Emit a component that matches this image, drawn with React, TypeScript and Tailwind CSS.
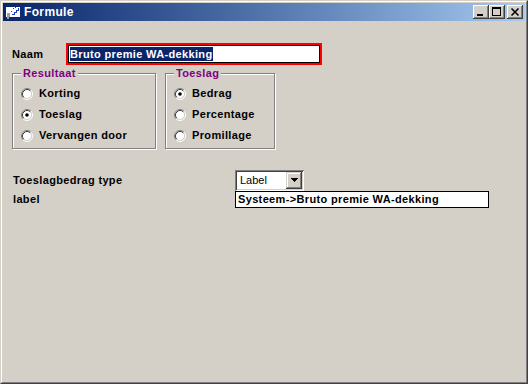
import React from 'react';

const Radio = ({ checked = false }: { checked?: boolean }) => (
  <svg width="12" height="12" viewBox="0 0 12 12" className="shrink-0">
    <circle cx="6" cy="6" r="4.5" fill="#fff" />
    <path d="M2.11 9.89 A5.5 5.5 0 0 1 9.89 2.11" fill="none" stroke="#808080" />
    <path d="M9.89 2.11 A5.5 5.5 0 0 1 2.11 9.89" fill="none" stroke="#fff" />
    <path d="M2.82 9.18 A4.5 4.5 0 0 1 9.18 2.82" fill="none" stroke="#404040" />
    <path d="M9.18 2.82 A4.5 4.5 0 0 1 2.82 9.18" fill="none" stroke="#d4d0c8" />
    {checked && <circle cx="6" cy="6" r="1.8" fill="#000" />}
  </svg>
);

const CapBtn = ({ children }: { children: React.ReactNode }) => (
  <div className="w-[16px] h-[14px] bg-[#d4d0c8] shadow-[inset_-1px_-1px_0_#404040,inset_1px_1px_0_#fff,inset_-2px_-2px_0_#808080,inset_2px_2px_0_#d4d0c8]">
    <svg width="16" height="14" viewBox="0 0 16 14" shapeRendering="crispEdges">
      {children}
    </svg>
  </div>
);

const Group = ({ title, width, items }: { title: string; width: string; items: { label: string; checked?: boolean }[] }) => (
  <div className={`relative ${width} border border-[#808080] shadow-[inset_1px_1px_0_#fff,1px_1px_0_#fff] pl-[8px] pt-[9px] pb-[2px]`}>
    <span className="absolute -top-[7px] left-[8px] h-[13px] leading-[13px] px-[2px] bg-[#d4d0c8] text-[#800080]">
      {title}
    </span>
    {items.map((it) => (
      <div key={it.label} className="flex items-center h-[21px] gap-[6px]">
        <Radio checked={it.checked} />
        <span>{it.label}</span>
      </div>
    ))}
  </div>
);

export default function App() {
  return (
    <div className="w-[528px] h-[384px] border border-t-[#d4d0c8] border-l-[#d4d0c8] border-r-[#404040] border-b-[#404040] bg-[#d4d0c8] [font-family:'Liberation_Sans',Arial,sans-serif] text-[11px] leading-[13px] font-bold tracking-[0.35px] text-black">
      <div className="h-full border border-t-white border-l-white border-r-[#808080] border-b-[#808080] p-[1px] flex flex-col">
        {/* title bar */}
        <div className="h-[18px] shrink-0 flex items-center bg-linear-to-r from-[#0a246a] to-[#a6caf0] pl-[2px] pr-[2px]">
          <svg width="16" height="16" viewBox="0 0 16 16" className="shrink-0" shapeRendering="crispEdges">
            <rect x="1" y="3" width="14" height="10" fill="#fff" />
            <path d="M7 10h2v-2h2v-2h2v-2h1" stroke="#1c3cc8" fill="none" />
            <rect x="8" y="4" width="1" height="1" fill="#1c3cc8" />
            <rect x="10" y="3" width="1" height="1" fill="#1c3cc8" />
            <rect x="11" y="6" width="1" height="1" fill="#1c3cc8" />
            <rect x="6" y="7" width="1" height="1" fill="#1c3cc8" />
            <path d="M2 9h3v4h-1v2h-2z" fill="#a0a0a0" />
          </svg>
          <span className="ml-[3px] text-white text-[12px]">Formule</span>
          <div className="ml-auto flex items-center">
            <CapBtn>
              <rect x="4" y="9" width="6" height="2" fill="#000" />
            </CapBtn>
            <CapBtn>
              <rect x="3.5" y="2.5" width="8" height="8" fill="none" stroke="#000" />
              <rect x="3" y="3" width="9" height="1" fill="#000" />
            </CapBtn>
            <div className="w-[2px]" />
            <CapBtn>
              <path d="M4.5 3.5 L11.5 10.5 M11.5 3.5 L4.5 10.5" stroke="#000" strokeWidth="1.6" shapeRendering="auto" />
            </CapBtn>
          </div>
        </div>

        {/* content */}
        <div className="flex flex-col pl-[9px]">
          <div className="flex items-center mt-[22px]">
            <span className="w-[54px] pt-[1px]">Naam</span>
            <div className="w-[256px] h-[22px] border-2 border-[#ff0000]">
              <div className="h-full border border-black bg-white pl-[1px] pt-[1px]">
                <span className="inline-block h-[14px] leading-[14px] bg-[#0a246a] text-white">Bruto premie WA-dekking</span>
              </div>
            </div>
          </div>

          <div className="flex mt-[8px] gap-[9px]">
            <Group
              title="Resultaat"
              width="w-[144px]"
              items={[{ label: 'Korting' }, { label: 'Toeslag', checked: true }, { label: 'Vervangen door' }]}
            />
            <Group
              title="Toeslag"
              width="w-[110px]"
              items={[{ label: 'Bedrag', checked: true }, { label: 'Percentage' }, { label: 'Promillage' }]}
            />
          </div>

          <div className="flex items-center h-[22px] mt-[20px]">
            <span className="w-[223px] pl-[1px]">Toeslagbedrag type</span>
            <div className="w-[69px] h-[21px] flex items-center bg-white shadow-[inset_1px_1px_0_#808080,inset_-1px_-1px_0_#fff,inset_2px_2px_0_#404040,inset_-2px_-2px_0_#d4d0c8] pl-[5px] pr-[2px]">
              <span className="font-normal tracking-normal">Label</span>
              <div className="ml-auto w-[16px] h-[17px] bg-[#d4d0c8] flex items-center justify-center shadow-[inset_-1px_-1px_0_#404040,inset_1px_1px_0_#d4d0c8,inset_-2px_-2px_0_#808080,inset_2px_2px_0_#fff]">
                <svg width="7" height="4" viewBox="0 0 7 4" shapeRendering="crispEdges">
                  <path d="M0 0h7v1h-1v1h-1v1h-1v1h-1v-1h-1v-1h-1v-1h-1z" fill="#000" />
                </svg>
              </div>
            </div>
          </div>
          <div className="flex items-center h-[17px]">
            <span className="w-[223px] pl-[1px]">label</span>
            <div className="w-[254px] h-[17px] border border-black bg-white pl-[2px] flex items-center">
              Systeem-&gt;Bruto premie WA-dekking
            </div>
          </div>
        </div>
      </div>
    </div>
  );
}
